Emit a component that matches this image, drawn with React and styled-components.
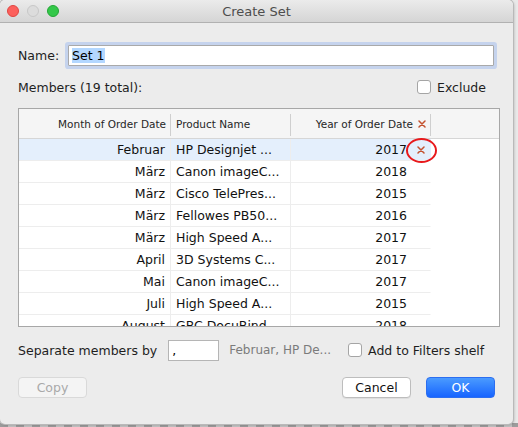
import React from 'react';
import styled, { createGlobalStyle } from 'styled-components';

const Global = createGlobalStyle`
  html, body {
    margin: 0;
    padding: 0;
  }
  body {
    width: 518px;
    height: 427px;
    overflow: hidden;
    background: #e9e9e9;
    font-family: "DejaVu Sans", "Liberation Sans", sans-serif;
  }
`;

const Stage = styled.div`
  position: relative;
  width: 518px;
  height: 427px;
  background:
    repeating-linear-gradient(90deg, #9c9c9c 0 8px, #c4c4c4 8px 16px) bottom / 100% 4px no-repeat,
    #e9e9e9;
`;

const Window = styled.div`
  width: 513px;
  height: 424px;
  background: #ececec;
  border-radius: 5px;
  box-shadow: 0 0 0 1px #b9b9b9, 1px 1px 3px rgba(0, 0, 0, 0.25);
  display: flex;
  flex-direction: column;
  overflow: hidden;
`;

const TitleBar = styled.div`
  height: 22px;
  flex: none;
  display: flex;
  align-items: center;
  position: relative;
  background: linear-gradient(#ebebeb, #d5d5d5);
  border-bottom: 1px solid #b1b1b1;
  font-size: 13px;
  color: #4d4d4d;
  justify-content: center;
`;

const Lights = styled.div`
  position: absolute;
  left: 7px;
  top: 5px;
  display: flex;
  gap: 8px;
`;

const Light = styled.span`
  width: 12px;
  height: 12px;
  border-radius: 50%;
  box-sizing: border-box;
  background: ${p => p.$c};
  border: 1px solid ${p => p.$b};
`;

const Body = styled.div`
  flex: 1;
  display: flex;
  flex-direction: column;
  padding: 20px 18px 0 18px;
`;

const Row = styled.div`
  display: flex;
  align-items: center;
  height: ${p => p.$h || 'auto'};
  margin-top: ${p => p.$mt || 0};
`;

const Label = styled.span`
  font-size: 12.5px;
  color: #1e1e1e;
  white-space: nowrap;
  margin-right: ${p => p.$mr || 0};
`;

const NameInput = styled.div`
  flex: none;
  width: 421px;
  height: 19px;
  margin-left: 9px;
  background: #fff;
  border: 1px solid #a9a9a9;
  box-shadow: 0 0 0 3px #c5d3ed;
  border-radius: 1px;
  display: flex;
  align-items: center;
  padding-left: 3px;
  font-size: 12.5px;
`;

const Selected = styled.span`
  background: #b3d7ff;
  color: #000;
`;

const Check = styled.span`
  width: 12px;
  height: 12px;
  border: 1px solid #a5a5a5;
  border-radius: 3px;
  background: #fff;
  margin-right: 6px;
  flex: none;
`;

const Spacer = styled.div`
  flex: 1;
`;

const Table = styled.div`
  margin-top: 13px;
  width: 480px;
  height: 217px;
  border: 1px solid #a7a7a7;
  background: #fff;
  display: grid;
  grid-template-columns: 152px 120px 140px 1fr;
  grid-auto-rows: 22px;
  grid-template-rows: 30px;
  overflow: hidden;
  position: relative;
`;

const Head = styled.div`
  display: flex;
  align-items: center;
  justify-content: ${p => (p.$right ? 'flex-end' : 'flex-start')};
  padding: 0 5px;
  font-size: 10.5px;
  color: #262626;
  background: #f5f5f5;
  border-bottom: 1px solid #d6d6d6;
  position: relative;
  &::after {
    content: '';
    position: absolute;
    right: 0;
    top: 5px;
    bottom: 2px;
    width: 1px;
    background: #cfcfcf;
  }
`;

const Cell = styled.div`
  display: flex;
  align-items: center;
  justify-content: ${p => (p.$right ? 'flex-end' : 'flex-start')};
  padding: 0 5px;
  font-size: 12.5px;
  color: #111;
  white-space: nowrap;
  overflow: hidden;
  background: ${p => (p.$sel ? '#e4effc' : '#fff')};
  border-bottom: 1px solid #ededed;
  border-right: 1px solid ${p => (p.$noline ? 'transparent' : '#ededed')};
`;

const Empty = styled.div`
  background: ${p => (p.$head ? '#f5f5f5' : '#fff')};
  border-bottom: ${p => (p.$head ? '1px solid #d6d6d6' : 'none')};
`;

const XIcon = styled.svg`
  width: 8px;
  height: 8px;
  flex: none;
  margin-left: ${p => p.$ml || '10px'};
  visibility: ${p => (p.$hidden ? 'hidden' : 'visible')};
`;

const RedX = ({ $ml, $hidden }) => (
  <XIcon viewBox="0 0 8 8" $ml={$ml} $hidden={$hidden}>
    <path d="M1 1L7 7M7 1L1 7" stroke="#c4522f" strokeWidth="1.5" strokeLinecap="round" />
  </XIcon>
);

const Ring = styled.span`
  position: absolute;
  left: 387px;
  top: 29px;
  width: 27px;
  height: 21px;
  border: 2px solid #e8191c;
  border-radius: 50%;
`;

const SepInput = styled.div`
  width: 46px;
  height: 19px;
  background: #fff;
  border: 1px solid #b5b5b5;
  margin-right: 10px;
  font-size: 12.5px;
  padding-left: 3px;
  display: flex;
  align-items: center;
`;

const Preview = styled.span`
  font-size: 12px;
  color: #7b7b7b;
  margin-right: 17px;
`;

const Button = styled.div`
  width: 69px;
  height: 21px;
  border-radius: 4px;
  display: flex;
  align-items: center;
  justify-content: center;
  font-size: 12.5px;
  box-sizing: border-box;
  margin-left: ${p => p.$ml || 0};
  ${p =>
    p.$primary
      ? `background: linear-gradient(#4a9bff, #1764ff); color: #fff; border: 1px solid #2c6ef0;`
      : p.$disabled
      ? `background: #f4f4f4; color: #a9a9a9; border: 1px solid #d9d9d9;`
      : `background: #fff; color: #111; border: 1px solid #bdbdbd; box-shadow: 0 1px 0 rgba(0,0,0,0.06);`}
`;

const rows = [
  ['Februar', 'HP Designjet ...', '2017'],
  ['März', 'Canon imageC...', '2018'],
  ['März', 'Cisco TelePres...', '2015'],
  ['März', 'Fellowes PB50...', '2016'],
  ['März', 'High Speed A...', '2017'],
  ['April', '3D Systems C...', '2017'],
  ['Mai', 'Canon imageC...', '2017'],
  ['Juli', 'High Speed A...', '2015'],
  ['August', 'GBC DocuBind...', '2018'],
];

export default function App() {
  return (
    <>
      <Global />
      <Stage>
        <Window>
          <TitleBar>
            <Lights>
              <Light $c="#fc605c" $b="#de4642" />
              <Light $c="#dcdcdc" $b="#c7c7c7" />
              <Light $c="#34c84a" $b="#24a636" />
            </Lights>
            Create Set
          </TitleBar>
          <Body>
            <Row $h="24px">
              <Label>Name:</Label>
              <NameInput>
                <Selected>Set 1</Selected>
              </NameInput>
            </Row>
            <Row $h="16px" $mt="12px">
              <Label>Members (19 total):</Label>
              <Spacer />
              <Check />
              <Label $mr="9px">Exclude</Label>
            </Row>
            <Table>
              <Head $right>Month of Order Date</Head>
              <Head>Product Name</Head>
              <Head $right>
                Year of Order Date <RedX $ml="5px" />
              </Head>
              <Empty $head />
              {rows.map((r, i) => (
                <React.Fragment key={i}>
                  <Cell $right $sel={i === 0}>{r[0]}</Cell>
                  <Cell $sel={i === 0}>{r[1]}</Cell>
                  <Cell $right $sel={i === 0} $noline>
                    {r[2]}
                    <RedX $hidden={i !== 0} />
                  </Cell>
                  <Empty />
                </React.Fragment>
              ))}
              <Ring />
            </Table>
            <Row $h="22px" $mt="12px">
              <Label $mr="11px">Separate members by</Label>
              <SepInput>,</SepInput>
              <Preview>Februar, HP De...</Preview>
              <Check />
              <Label>Add to Filters shelf</Label>
            </Row>
            <Row $mt="16px">
              <Button $disabled>Copy</Button>
              <Spacer />
              <Button>Cancel</Button>
              <Button $primary $ml="15px">OK</Button>
            </Row>
          </Body>
        </Window>
      </Stage>
    </>
  );
}
